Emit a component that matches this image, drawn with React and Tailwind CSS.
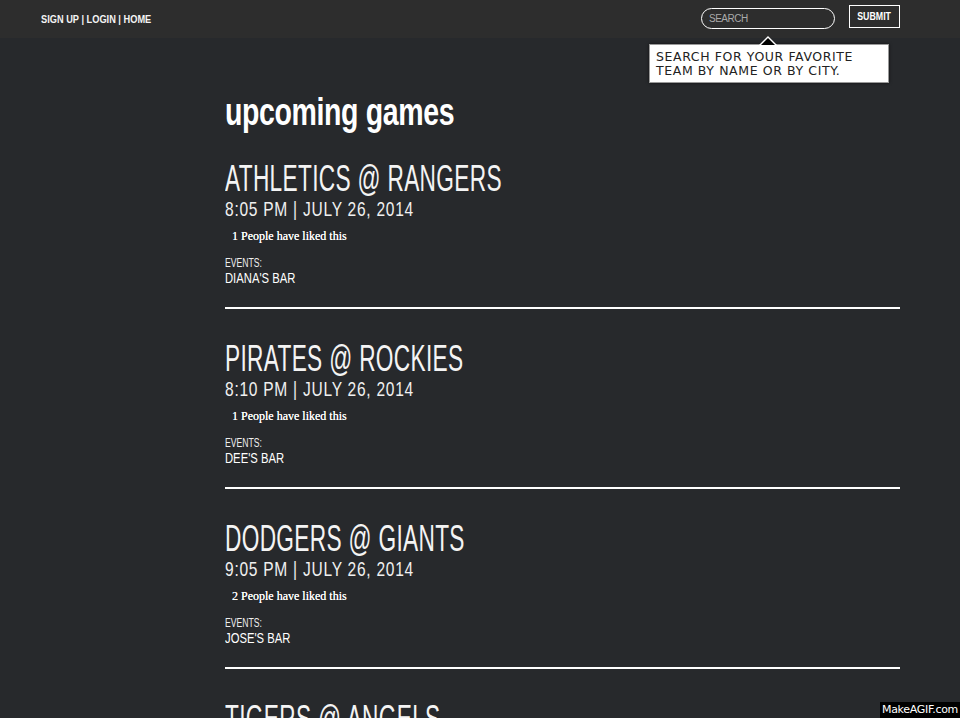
import { useState } from "react";

const games = [
  { title: "ATHLETICS @ RANGERS", time: "8:05 PM | JULY 26, 2014", likes: 1, bar: "DIANA'S BAR" },
  { title: "PIRATES @ ROCKIES", time: "8:10 PM | JULY 26, 2014", likes: 1, bar: "DEE'S BAR" },
  { title: "DODGERS @ GIANTS", time: "9:05 PM | JULY 26, 2014", likes: 2, bar: "JOSE'S BAR" },
  { title: "TIGERS @ ANGELS", time: "9:05 PM | JULY 26, 2014", likes: 0, bar: "" },
];

// condensed lettering: no narrow face installed, so squeeze Liberation Sans
function Game({ game }) {
  return (
    <div className="pt-[31px] h-[180px] border-b-2 border-white">
      <h2 className="block w-max whitespace-nowrap origin-left scale-x-[0.63] text-[36px] leading-[37px] tracking-[0.5px] text-[#f4f4f4]">
        {game.title}
      </h2>
      <div className="block w-max whitespace-nowrap origin-left scale-x-[0.74] text-[21px] leading-[24px] tracking-[1px] text-[#f0f0f0]">
        {game.time}
      </div>
      <p className="mt-[7px] ml-[7px] text-[12px] leading-[16px] text-white font-['Liberation_Serif',serif] [text-shadow:0_0_0.4px_#fff]">
        {game.likes} People have liked this
      </p>
      <div className="mt-[13px] block w-max origin-left scale-x-[0.72] text-[12px] leading-[13px] text-[#eee]">EVENTS:</div>
      <div className="block w-max whitespace-nowrap origin-left scale-x-[0.75] text-[15px] leading-[16px] text-white">
        {game.bar}
      </div>
    </div>
  );
}

export default function App() {
  const [query, setQuery] = useState("");
  return (
    <div className="h-[718px] overflow-hidden bg-[#27292c] relative font-['Liberation_Sans',sans-serif]">
      <header className="h-[38px] bg-[#2d2d2d] flex items-center pl-[41px] pr-[60px] relative">
        <nav className="block w-max whitespace-nowrap origin-left scale-x-[0.84] text-[11px] font-bold text-[#f4f4f4]">
          SIGN UP | LOGIN | HOME
        </nav>
        <div className="ml-auto flex items-center gap-[14px]">
          <input
            value={query}
            onChange={(e) => setQuery(e.target.value)}
            placeholder="SEARCH"
            className="w-[134px] h-[21px] mt-[-2px] rounded-full border border-white bg-transparent px-[7px] text-[10px] tracking-[-0.5px] text-white placeholder:text-[#aaa] outline-none"
          />
          <button className="w-[51px] h-[23px] mt-[-6px] border border-white flex items-center justify-center">
            <span className="block w-max scale-x-[0.8] text-[11px] font-bold text-white">SUBMIT</span>
          </button>
        </div>
        <div className="absolute left-[649px] top-[44px] w-[240px] h-[39px] bg-white border border-[#999] shadow-[0_0_3px_rgba(0,0,0,0.6)] px-[6px] pt-[5px]">
          <div className="absolute left-[109px] -top-[9px] w-0 h-0 border-l-[9px] border-r-[9px] border-b-[9px] border-l-transparent border-r-transparent border-b-white" />
          <div className="absolute left-[111px] -top-[7px] w-0 h-0 border-l-[7px] border-r-[7px] border-b-[7px] border-l-transparent border-r-transparent border-b-black" />
          <p className="text-[12.5px] leading-[14px] tracking-[0.6px] text-[#222] font-['DejaVu_Sans',Verdana,sans-serif]">
            SEARCH FOR YOUR FAVORITE<br />TEAM BY NAME OR BY CITY.
          </p>
        </div>
      </header>
      <main className="ml-[225px] w-[675px] pt-[52px]">
        <h1 className="block w-max whitespace-nowrap origin-left scale-x-[0.75] text-[38px] leading-[44px] font-bold tracking-[-0.5px] text-white">
          upcoming games
        </h1>
        <div className="mt-[-5px]">
          {games.map((g) => (
            <Game key={g.title} game={g} />
          ))}
        </div>
      </main>
      <div className="absolute right-0 bottom-0 w-[80px] h-[16px] bg-black text-white text-[11px] leading-[16px] text-center font-['DejaVu_Sans',sans-serif] tracking-[-0.3px]">
        MakeAGIF.com
      </div>
    </div>
  );
}
